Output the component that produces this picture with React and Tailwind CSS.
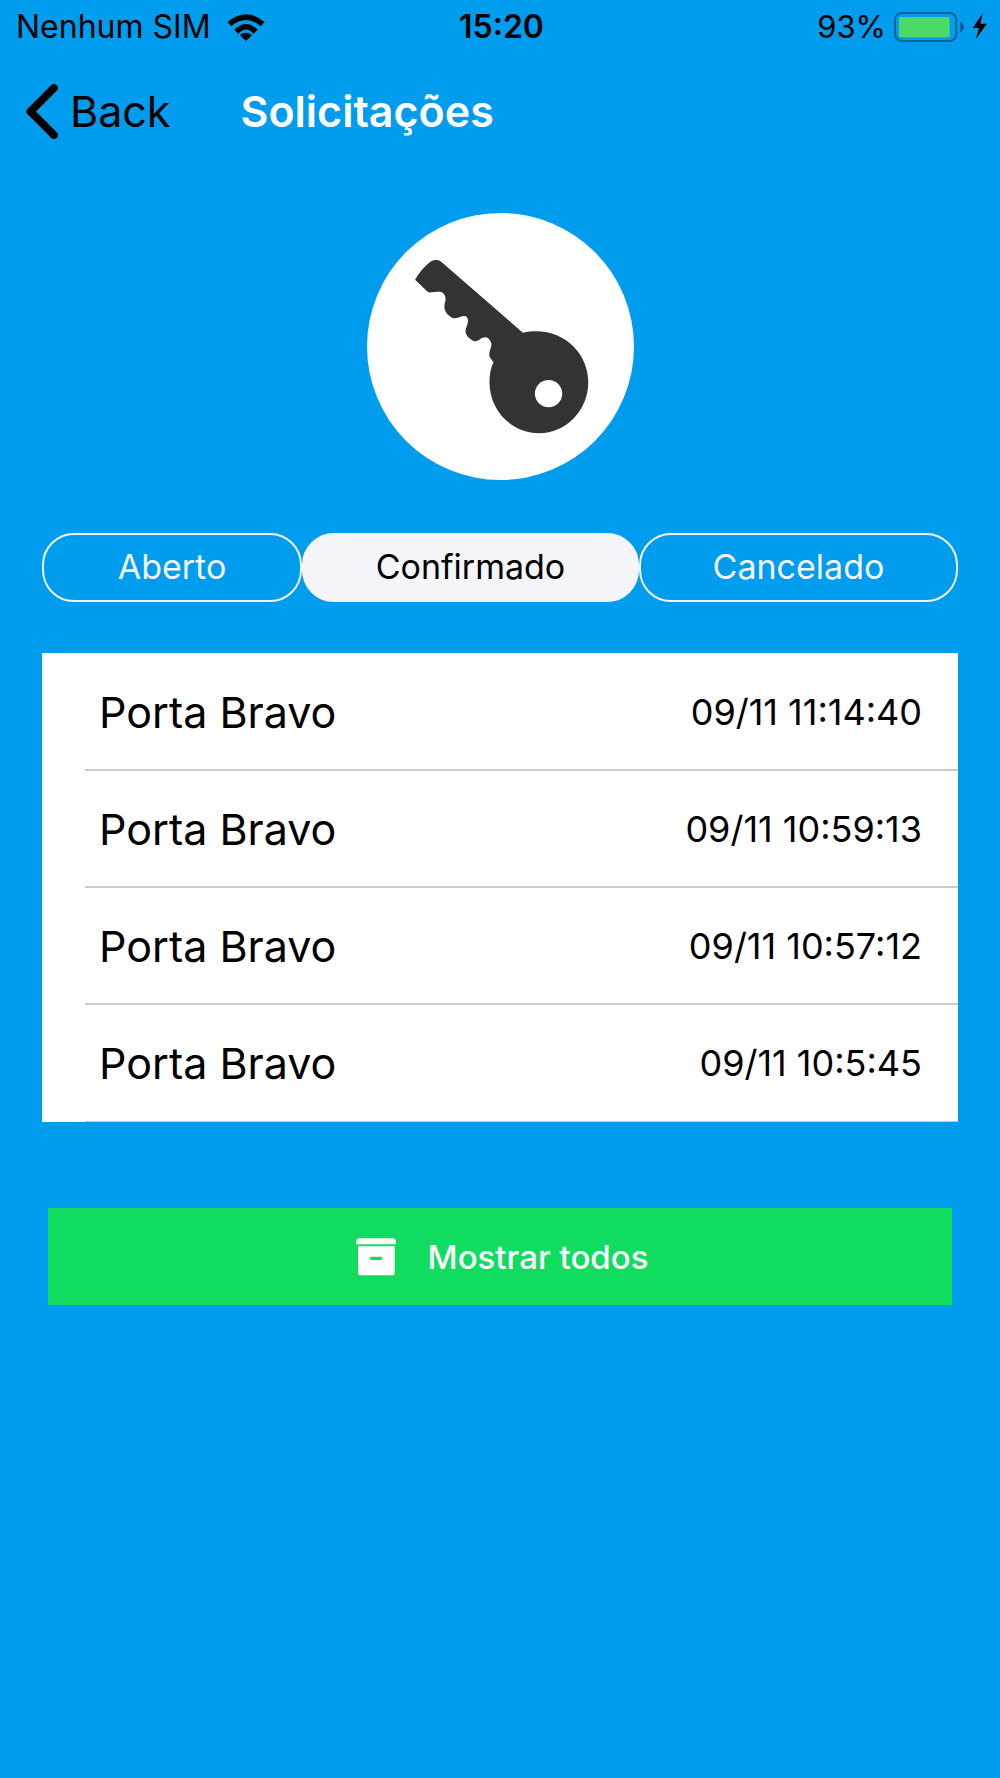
import { useState } from 'react';

const tabs = ['Aberto', 'Confirmado', 'Cancelado'];

const requests = [
  { id: 1, name: 'Porta Bravo', date: '09/11 11:14:40' },
  { id: 2, name: 'Porta Bravo', date: '09/11 10:59:13' },
  { id: 3, name: 'Porta Bravo', date: '09/11 10:57:12' },
  { id: 4, name: 'Porta Bravo', date: '09/11 10:5:45' },
];

const WifiIcon = () => (
  <svg viewBox="676 38 113 82" className="w-[38px] h-[27px]" fill="none" stroke="black" strokeWidth="17">
    <path d="M682 69 Q732.5 26 783 69" />
    <path d="M703 92 Q732.5 61 762 92" />
    <path d="M714 102 Q732.5 88 751 102 L732.5 120 Z" fill="black" stroke="none" />
  </svg>
);

const BatteryIcon = () => (
  <svg viewBox="342 36 279 90" className="w-[93px] h-[30px]">
    <rect x="345" y="39" width="184" height="84" rx="20" fill="none" stroke="#01609a" strokeWidth="6" />
    <rect x="357" y="51" width="152" height="61" rx="5" fill="#4cd964" />
    <path d="M540 65 Q552 70 552 81 Q552 92 540 97 Z" fill="#01609a" />
    <path d="M608 40 L578 84 L597 84 L587 118 L621 71 L601 71 Z" fill="black" />
  </svg>
);

const ChevronIcon = () => (
  <svg viewBox="78 250 96 166" className="w-8 h-[55px]" fill="none" stroke="black" strokeWidth="24">
    <path d="M162 262 L91 333 L162 404" strokeLinecap="round" strokeLinejoin="round" />
  </svg>
);

const KeyIcon = () => (
  <svg viewBox="50 38 800 800" className="w-[267px] h-[267px]">
    <circle cx="450" cy="438" r="400" fill="white" />
    <path
      fill="#333333"
      d="M194 238 Q212 205 241 183 Q262 174 275 186 L517 397 C625 373 713 450 713 545 C713 630 645 698 566 698 C484 698 417 630 417 545 C417 521 421 501 429 485 L418 470 C411 453 428 440 421 424 C413 407 400 408 389 416 C375 424 370 425 359 415 C343 401 342 394 350 374 C356 358 352 344 336 347 C326 348 320 355 309 353 C296 349 282 334 282 322 C281 307 287 303 285 291 C282 278 275 273 261 274 L236 276 Q229 274 223 266 Z"
    />
    <circle cx="594" cy="579" r="41" fill="white" />
  </svg>
);

const ArchiveIcon = () => (
  <svg viewBox="0 0 120 114" className="w-10 h-[38px]" fill="white">
    <path d="M0 19 V13 Q0 1 12 1 H108 Q120 1 120 13 V19 Z" />
    <path
      fillRule="evenodd"
      d="M6 25 H116 V104 Q116 112 108 112 H14 Q6 112 6 104 Z M46 56 Q42 57 42 61 Q42 65 46 66 H74 Q79 65 79 61 Q79 57 74 56 Z"
    />
  </svg>
);

const StatusBar = () => (
  <div className="grid grid-cols-3 items-center h-[54px] pl-4 pr-[13px] text-[32px] leading-9">
    <div className="flex items-center gap-4">
      <span>Nenhum SIM</span>
      <WifiIcon />
    </div>
    <span className="text-center font-semibold">15:20</span>
    <div className="flex items-center justify-end gap-2 text-[31px]">
      <span>93%</span>
      <BatteryIcon />
    </div>
  </div>
);

const Header = () => (
  <header className="flex items-center h-[114px] pl-[26px] gap-[70px]">
    <button type="button" className="flex items-center gap-3 text-[43px] leading-[54px] cursor-pointer">
      <ChevronIcon />
      Back
    </button>
    <h1 className="text-white text-[43px] leading-[54px] font-semibold">Solicitações</h1>
  </header>
);

export default function App() {
  const [active, setActive] = useState('Confirmado');

  return (
    <div className="min-h-screen bg-[#009cee] text-black font-['Inter',sans-serif]">
      <StatusBar />
      <Header />

      <main className="px-[42px] pt-[45px]">
        <div className="flex justify-center">
          <KeyIcon />
        </div>

        <div className="grid grid-cols-[260fr_337fr_319fr] mt-[53px]">
          {tabs.map(tab => (
            <button
              key={tab}
              type="button"
              onClick={() => setActive(tab)}
              className={
                tab === active
                  ? 'h-[69px] pb-0.5 rounded-[32px] border-2 border-[#f4f5f8] bg-[#f4f5f8] text-[34px] leading-10 cursor-pointer'
                  : 'h-[69px] pb-0.5 rounded-[32px] border-2 border-[#f4f5f8] text-[#f4f5f8] text-[34px] leading-10 cursor-pointer'
              }
            >
              {tab}
            </button>
          ))}
        </div>

        <ul className="mt-[51px] bg-white pt-px pl-[43px]">
          {requests.map(({ id, name, date }) => (
            <li
              key={id}
              className="flex items-center justify-between h-[117px] pl-3.5 pr-9 border-b-2 last:border-b border-[#cbcbcb]"
            >
              <span className="text-[43px] leading-[54px]">{name}</span>
              <span className="text-[36px] leading-10">{date}</span>
            </li>
          ))}
        </ul>

        <div className="px-1.5 mt-[86px]">
          <button
            type="button"
            className="flex items-center justify-center gap-8 w-full h-[97px] pl-1 bg-[#10dc60] text-white text-[33px] leading-10 font-medium cursor-pointer"
          >
            <ArchiveIcon />
            Mostrar todos
          </button>
        </div>
      </main>
    </div>
  );
}
